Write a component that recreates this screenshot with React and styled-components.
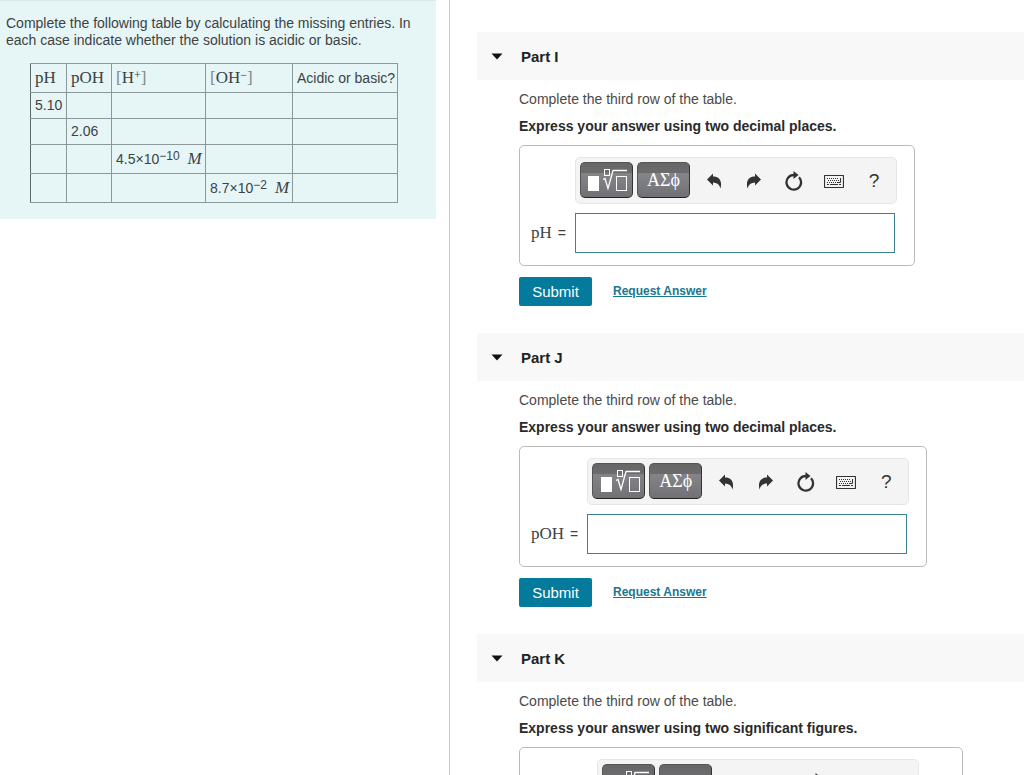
import React, { useState } from 'react';
import styled, { createGlobalStyle } from 'styled-components';

const GlobalStyle = createGlobalStyle`
  * {
    box-sizing: border-box;
  }

  body {
    margin: 0;
    background: #fff;
    color: #3c4344;
    font-family: 'Liberation Sans', Arial, sans-serif;
    font-size: 14px;
  }
`;

const Page = styled.div`
  display: flex;
  height: 100vh;
`;

const Sidebar = styled.aside`
  flex: 0 1 450px;
  padding-right: 13px;
  border-right: 1px solid #c8c8c8;
`;

const Problem = styled.div`
  padding: 14px 6px 16px;
  border-top: 1px solid #dbe8e9;
  background: #e6f5f6;
`;

const Intro = styled.p`
  margin: 0 0 14px;
  line-height: 17px;
`;

const Table = styled.table`
  width: 368px;
  margin-left: 24px;
  table-layout: fixed;
  border-collapse: collapse;
  border: 1px solid #333;
  line-height: 17px;
  white-space: nowrap;
`;

const Cell = styled.td`
  height: ${({ $tall }) => ($tall ? 29 : 26)}px;
  padding: 0 4px;
  border: 1px solid #8b999b;
  border-left-color: #5c686a;
  font-weight: normal;
  text-align: left;
`;

const MathText = styled.span`
  font-family: 'Liberation Serif', 'Times New Roman', serif;
  font-size: 17px;
  font-style: ${({ $italic }) => ($italic ? 'italic' : 'normal')};
`;

const Bracket = styled.span`
  color: #7d8687;
`;

const Sup = styled.sup`
  font-size: 12px;
  line-height: 0;
  vertical-align: 4px;
`;

const Unit = styled(MathText)`
  margin-left: 8px;
`;

const Main = styled.main`
  flex: 1;
  min-width: 0;
  padding: 32px 0 0 27px;
  overflow-y: auto;
  scrollbar-width: none;
`;

const Section = styled.section`
  margin-bottom: 27px;
`;

const Header = styled.button`
  display: flex;
  align-items: center;
  gap: 18px;
  width: 100%;
  height: 48px;
  padding: 0 0 0 14px;
  border: 0;
  background: #f8f8f8;
  color: #222;
  font-family: inherit;
  font-size: 15px;
  font-weight: bold;
  cursor: pointer;
`;

const Body = styled.div`
  padding: 11px 20px 0 42px;
`;

const Text = styled.p`
  margin: 0 0 10px;
  line-height: 17px;
  color: #4a4a4a;
`;

const Instruction = styled(Text)`
  color: #2a2a2a;
  font-weight: bold;
`;

const AnswerBox = styled.div`
  display: inline-grid;
  grid-template-columns: auto auto auto;
  align-items: center;
  row-gap: 9px;
  padding: 11px 17px 12px 11px;
  border: 1px solid #bbb;
  border-radius: 5px;
  vertical-align: top;
`;

const Label = styled.label`
  grid-area: 2 / 1;
  padding-right: 9px;
`;

const Equals = styled.span`
  margin-left: 6px;
`;

const Toolbar = styled.div`
  grid-area: 1 / 2;
  display: flex;
  align-items: flex-start;
  width: 322px;
  height: 47px;
  padding: 4px 0 0 4px;
  border: 1px solid #e6e6e6;
  border-radius: 5px;
  background: #f4f4f4;
`;

const PaletteButton = styled.button`
  display: flex;
  flex: none;
  align-items: center;
  justify-content: center;
  width: 53px;
  height: 36px;
  margin-right: 4px;
  padding: 0;
  border: 1px solid #555;
  border-right-color: #333;
  border-bottom-color: #222;
  border-radius: 5px;
  background: linear-gradient(#666 0, #6c6c6e 30%, #858589 31%, #707075 100%);
  color: #fff;
  font-family: 'Liberation Serif', 'Times New Roman', serif;
  font-size: 18px;
`;

const ToolButton = styled.button`
  display: flex;
  flex: none;
  align-items: center;
  justify-content: center;
  width: 40px;
  height: 38px;
  padding: 0;
  border: 0;
  background: none;
  color: #333;
  font-family: inherit;
  font-size: 19px;
`;

const AnswerInput = styled.input`
  grid-area: 2 / 2;
  width: 320px;
  height: 40px;
  padding: 0 8px;
  border: 1px solid #3d8294;
  background: #fff;
  font-size: 16px;
`;

const AnswerUnit = styled(Unit)`
  grid-area: 2 / 3;
  padding-left: 4px;
`;

const Actions = styled.div`
  display: flex;
  align-items: center;
  gap: 21px;
  margin-top: 11px;
`;

const Submit = styled.button`
  width: 73px;
  height: 29px;
  padding: 0;
  border: 0;
  border-radius: 2px;
  background: #047a9c;
  color: #fff;
  font-family: inherit;
  font-size: 15px;
`;

const RequestLink = styled.a`
  padding-bottom: 2px;
  color: #1b7690;
  font-size: 12px;
  font-weight: bold;
`;

const Caret = () => (
  <svg width="12" height="7" viewBox="0 0 12 7" aria-hidden="true">
    <path d="M0.5 0.5h11L6 6.5z" fill="#111" />
  </svg>
);

const TemplateIcon = () => (
  <svg width="42" height="26" viewBox="0 0 42 26" fill="none" stroke="#fff" aria-hidden="true">
    <rect x="3" y="9" width="11" height="15" fill="#fff" stroke="none" />
    <rect x="19.5" y="2.5" width="5" height="6" />
    <path d="M18 12.5l2-1 3 10L28 3.5h14" strokeWidth="1.3" />
    <rect x="31.5" y="9.5" width="10" height="14" />
  </svg>
);

const ArrowIcon = ({ flip }) => (
  <svg width="16" height="16" viewBox="0 0 16 16" aria-hidden="true">
    <path
      d="M1 6.5L7 0.5v3c6 0 9.5 4 7.5 12C13.5 11.5 11 9.5 7 9.5v3z"
      fill="#333"
      transform={flip ? 'matrix(-1 0 0 1 16 0)' : undefined}
    />
  </svg>
);

const ResetIcon = () => (
  <svg width="18" height="20" viewBox="0 0 18 20" fill="none" aria-hidden="true">
    <path d="M14 6.2A7.3 7.3 0 1 1 9 4" stroke="#333" strokeWidth="2.3" />
    <path d="M8.5 0l5 4-5 4z" fill="#333" />
  </svg>
);

const KeyboardIcon = () => (
  <svg width="20" height="13" viewBox="0 0 20 13" fill="none" stroke="#333" aria-hidden="true">
    <rect x="0.5" y="0.5" width="19" height="12" rx="0.5" strokeWidth="1.2" />
    <path d="M3 3.5h12M4 5.5h11M3 7.5h11" strokeDasharray="1 1" />
    <path d="M16.5 3v4.5h-3" />
    <path d="M3 9.5h2M6 9.5h8M15 9.5h2" />
  </svg>
);

const Ion = ({ name, charge }) => (
  <MathText>
    <Bracket>[</Bracket>
    {name}
    <Sup>{charge}</Sup>
    <Bracket>]</Bracket>
  </MathText>
);

const parts = [
  { id: 'I', label: <MathText>pH</MathText>, precision: 'two decimal places' },
  { id: 'J', label: <MathText>pOH</MathText>, precision: 'two decimal places' },
  { id: 'K', label: <Ion name="OH" charge="−" />, precision: 'two significant figures', unit: 'M' },
];

function Part({ id, label, precision, unit }) {
  const [open, setOpen] = useState(true);
  const [answer, setAnswer] = useState('');

  return (
    <Section>
      <Header type="button" aria-expanded={open} onClick={() => setOpen(!open)}>
        <Caret />
        Part {id}
      </Header>
      {open && (
        <Body>
          <Text>Complete the third row of the table.</Text>
          <Instruction>Express your answer using {precision}.</Instruction>
          <AnswerBox>
            <Toolbar>
              <PaletteButton type="button" aria-label="Templates">
                <TemplateIcon />
              </PaletteButton>
              <PaletteButton type="button">ΑΣϕ</PaletteButton>
              <ToolButton type="button" aria-label="Undo">
                <ArrowIcon />
              </ToolButton>
              <ToolButton type="button" aria-label="Redo">
                <ArrowIcon flip />
              </ToolButton>
              <ToolButton type="button" aria-label="Reset">
                <ResetIcon />
              </ToolButton>
              <ToolButton type="button" aria-label="Keyboard shortcuts">
                <KeyboardIcon />
              </ToolButton>
              <ToolButton type="button">?</ToolButton>
            </Toolbar>
            <Label htmlFor={`answer-${id}`}>
              {label}
              <Equals>=</Equals>
            </Label>
            <AnswerInput
              id={`answer-${id}`}
              type="text"
              value={answer}
              onChange={e => setAnswer(e.target.value)}
            />
            {unit && <AnswerUnit $italic>{unit}</AnswerUnit>}
          </AnswerBox>
          <Actions>
            <Submit type="button">Submit</Submit>
            <RequestLink href="#">Request Answer</RequestLink>
          </Actions>
        </Body>
      )}
    </Section>
  );
}

function App() {
  return (
    <Page>
      <GlobalStyle />
      <Sidebar>
        <Problem>
          <Intro>
            Complete the following table by calculating the missing entries. In each case indicate
            whether the solution is acidic or basic.
          </Intro>
          <Table>
            <colgroup>
              <col width="36" />
              <col width="45" />
              <col width="94" />
              <col width="87" />
              <col width="105" />
            </colgroup>
            <thead>
              <tr>
                <Cell as="th" $tall><MathText>pH</MathText></Cell>
                <Cell as="th" $tall><MathText>pOH</MathText></Cell>
                <Cell as="th" $tall><Ion name="H" charge="+" /></Cell>
                <Cell as="th" $tall><Ion name="OH" charge="−" /></Cell>
                <Cell as="th" $tall>Acidic or basic?</Cell>
              </tr>
            </thead>
            <tbody>
              <tr>
                <Cell>5.10</Cell>
                <Cell />
                <Cell />
                <Cell />
                <Cell />
              </tr>
              <tr>
                <Cell />
                <Cell>2.06</Cell>
                <Cell />
                <Cell />
                <Cell />
              </tr>
              <tr>
                <Cell $tall />
                <Cell $tall />
                <Cell $tall>4.5×10<Sup>−10</Sup><Unit $italic>M</Unit></Cell>
                <Cell $tall />
                <Cell $tall />
              </tr>
              <tr>
                <Cell $tall />
                <Cell $tall />
                <Cell $tall />
                <Cell $tall>8.7×10<Sup>−2</Sup><Unit $italic>M</Unit></Cell>
                <Cell $tall />
              </tr>
            </tbody>
          </Table>
        </Problem>
      </Sidebar>
      <Main>
        {parts.map(part => (
          <Part key={part.id} {...part} />
        ))}
      </Main>
    </Page>
  );
}

export default App;
